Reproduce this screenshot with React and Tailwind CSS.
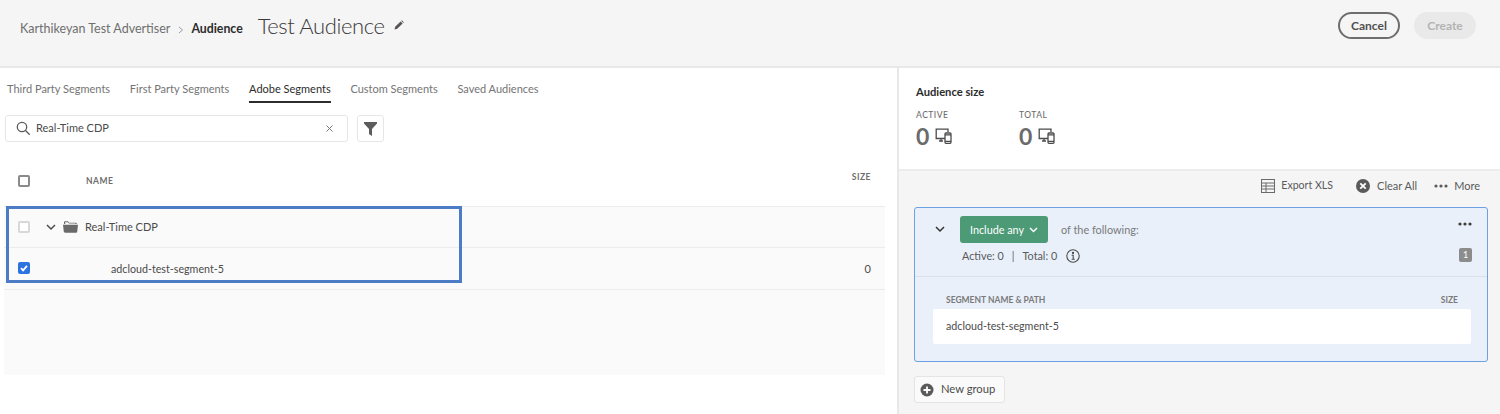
import React from 'react';

const DeviceIcon = () => (
    <svg width="17" height="16" viewBox="0 0 17 16" fill="none" stroke="#4b4b4b" strokeWidth="1.3">
        <path d="M10 10.5H1.2V1.2H13V4" />
        <path d="M4 13h4M6 10.5V13" />
        <rect x="10" y="5" width="6" height="10.3" rx="1" fill="#fff" />
        <path d="M10 6.8h6M10 13.4h6" />
    </svg>
);

const Stat = ({ label, className }) => (
    <div className={className}>
        <div className="mt-[1px] text-[8.5px] leading-3 tracking-[0.5px] font-medium text-[#6e6e6e]">{label}</div>
        <div className="mt-[1px] flex items-center gap-[6px]">
            <span className="text-[23px] leading-7 font-bold text-[#6b6b6b]">0</span>
            <DeviceIcon />
        </div>
    </div>
);

const Tab = ({ label, active }) => (
    <div className={`h-[35px] pt-[13px] text-[11px] leading-[16px] whitespace-nowrap ${active ? 'border-b-2 border-[#2c2c2c] text-[#2c2c2c]' : 'text-[#747474]'}`}>
        {label}
    </div>
);

const Checkbox = ({ checked, light }) => (
    <div className={`w-3 h-3 rounded-[2px] flex items-center justify-center ${checked ? 'bg-[#2d73e0]' : light ? 'border-2 border-[#d8d8d8] bg-white' : 'border-2 border-[#8a8a8a] bg-white'}`}>
        {checked && (
            <svg width="10" height="10" viewBox="0 0 10 10" fill="none" stroke="#fff" strokeWidth="1.8">
                <path d="M2 5.2l2.1 2.2L8 2.8" />
            </svg>
        )}
    </div>
);

const App = () => {
    return (
        <div className="relative w-[1500px] h-[414px] overflow-hidden bg-white text-[#4b4b4b] font-['Lato','Liberation_Sans',sans-serif]">
            {/* header */}
            <div className="h-[68px] bg-[#f5f5f5] border-b-2 border-[#e8e8e8] flex items-start justify-between pl-[20px] pr-[24px]">
                <div className="flex items-center h-[52px]">
                    <span className="text-[12.5px] pt-[7px] text-[#6f6f6f]">Karthikeyan Test Advertiser</span>
                    <svg className="ml-[8px] mt-[7px]" width="6" height="8" viewBox="0 0 6 8" fill="none" stroke="#9a9a9a" strokeWidth="1">
                        <path d="M1 1l3.5 3L1 7" />
                    </svg>
                    <span className="ml-[7px] pt-[7px] text-[12.3px] font-bold text-[#2c2c2c]">Audience</span>
                    <span className="ml-[15px] text-[22px] tracking-[-0.4px] leading-8 font-light text-[#3a3a3a]">Test Audience</span>
                    <svg className="ml-[9px] -mt-[2px]" width="10" height="10" viewBox="0 0 10 10" fill="#555">
                        <path d="M0.5 9.5l0.7-2.7 5.4-5.4 2 2-5.4 5.4zM7.2 0.8l0.6-0.5 2 2-0.5 0.6z" />
                    </svg>
                </div>
                <div className="flex items-center gap-[14px] pt-[12px]">
                    <div className="w-[62px] h-[27px] rounded-full border-2 border-[#6e6e6e] flex items-center justify-center text-[12px] font-bold text-[#505050]">Cancel</div>
                    <div className="w-[62px] h-[27px] rounded-full bg-[#e9e9e9] flex items-center justify-center text-[12px] font-bold text-[#b3b3b3]">Create</div>
                </div>
            </div>

            <div className="flex h-[346px]">
                {/* left panel */}
                <div className="w-[899px] shrink-0 border-r-2 border-[#e8e8e8]">
                    <div className="flex gap-[19.75px] pl-[7px] h-[35px]">
                        <Tab label="Third Party Segments" />
                        <Tab label="First Party Segments" />
                        <Tab label="Adobe Segments" active />
                        <Tab label="Custom Segments" />
                        <Tab label="Saved Audiences" />
                    </div>
                    <div className="flex gap-[9px] pl-[5px] mt-[12px]">
                        <div className="w-[343px] h-[27px] border border-[#e6e6e6] rounded-[3px] flex items-center pl-[10px] pr-[14px]">
                            <svg width="15" height="15" viewBox="0 0 15 15" fill="none" stroke="#5a5a5a" strokeWidth="1.3">
                                <circle cx="6" cy="6" r="4.7" />
                                <path d="M9.5 9.5l4.2 4.2" />
                            </svg>
                            <span className="ml-[5px] text-[11px] text-[#4b4b4b] flex-1">Real-Time CDP</span>
                            <svg width="7" height="7" viewBox="0 0 7 7" stroke="#777" strokeWidth="1">
                                <path d="M0.5 0.5l6 6M6.5 0.5l-6 6" />
                            </svg>
                        </div>
                        <div className="w-[27px] h-[27px] border border-[#e6e6e6] rounded-[3px] flex items-center justify-center">
                            <svg width="13" height="14" viewBox="0 0 13 14" fill="#5c5c5c">
                                <path d="M0 0h13v1.6L8 7v7L5 12V7L0 1.6z" />
                            </svg>
                        </div>
                    </div>

                    {/* table */}
                    <div className="mt-[25px] flex items-center justify-between h-[27px] pl-[18px] pr-[26px]">
                        <div className="flex items-center">
                            <Checkbox />
                            <span className="ml-[56px] pt-[1px] text-[8.5px] font-bold tracking-[0.5px] text-[#6e6e6e]">NAME</span>
                        </div>
                        <span className="text-[8.5px] font-bold tracking-[0.5px] text-[#6e6e6e] -mt-[6px]">SIZE</span>
                    </div>
                    <div className="ml-[4px] mr-[12px] mt-[12px] h-[169px] bg-[#fafafa]">
                        <div className="h-[42px] border-t border-b border-[#ececec] flex items-center pl-[14px]">
                            <Checkbox light />
                            <svg className="ml-[16px]" width="10" height="7" viewBox="0 0 10 7" fill="none" stroke="#4b4b4b" strokeWidth="1.5">
                                <path d="M1 1l4 4 4-4" />
                            </svg>
                            <svg className="ml-[7px]" width="15" height="12" viewBox="0 0 15 12" fill="#6a6a6a">
                                <path d="M1 3V1.2C1 .6 1.4.3 2 .3h3l1.2 1.4H13c.5 0 .8.3.8.8V3H12.5v-.4H6L4.8 1.2H2.2V3z" />
                                <path d="M0 3.8h15l-.8 7c0 .5-.4.9-1 .9H1.8c-.6 0-1-.4-1-.9z" />
                            </svg>
                            <span className="ml-[7px] text-[11px]">Real-Time CDP</span>
                        </div>
                        <div className="h-[42px] border-b border-[#ececec] flex items-start pt-[14px] pl-[14px]">
                            <Checkbox checked />
                            <span className="ml-[81px] leading-[14px] text-[10.7px] flex-1">adcloud-test-segment-5</span>
                            <span className="leading-[14px] text-[11px] pr-[14px]">0</span>
                        </div>
                    </div>
                </div>

                {/* right panel */}
                <div className="flex-1 min-w-0 bg-[#f5f5f5]">
                    <div className="h-[103px] bg-white border-b-2 border-[#ececec] pl-[17px] pt-[17px]">
                        <div className="text-[11.2px] leading-[14px] font-bold text-[#2c2c2c]">Audience size</div>
                        <div className="flex mt-[9px]">
                            <Stat label="ACTIVE" className="w-[103px]" />
                            <Stat label="TOTAL" />
                        </div>
                    </div>
                    <div className="h-[30px] flex items-center justify-end pr-[20px] text-[11px] text-[#5a5a5a]">
                        <svg width="14" height="14" viewBox="0 0 14 14" fill="none" stroke="#6a6a6a" strokeWidth="1">
                            <rect x="0.5" y="0.5" width="13" height="13" />
                            <path d="M0.5 4h13M0.5 7h13M0.5 10h13M5 4v9.5" />
                        </svg>
                        <span className="ml-[6px] text-[10.6px]">Export XLS</span>
                        <svg className="ml-[23px]" width="14" height="14" viewBox="0 0 14 14">
                            <circle cx="7" cy="7" r="7" fill="#5a5a5a" />
                            <path d="M4.3 4.3l5.4 5.4M9.7 4.3l-5.4 5.4" stroke="#fff" strokeWidth="1.8" />
                        </svg>
                        <span className="ml-[7px]">Clear All</span>
                        <svg className="ml-[17px]" width="14" height="4" viewBox="0 0 14 4" fill="#5a5a5a">
                            <circle cx="2" cy="2" r="1.6" /><circle cx="7" cy="2" r="1.6" /><circle cx="12" cy="2" r="1.6" />
                        </svg>
                        <span className="ml-[6px]">More</span>
                    </div>

                    {/* group card */}
                    <div className="ml-[15px] mr-[12px] mt-[6px] h-[155px] rounded-[3px] border border-[#6d9fe3] bg-[#e9f0fa]">
                        <div className="relative h-[69px] border-b border-[#dcdfe4] pl-[20px] pt-[8px]">
                            <div className="flex items-center">
                                <svg width="10" height="7" viewBox="0 0 10 7" fill="none" stroke="#333" strokeWidth="1.5">
                                    <path d="M1 1l4 4 4-4" />
                                </svg>
                                <div className="ml-[15px] w-[88px] h-[27px] pt-[1px] rounded-[3px] bg-[#4c9a76] flex items-center justify-center gap-[5px] text-[10.8px] text-white">
                                    Include any
                                    <svg width="9" height="6" viewBox="0 0 9 6" fill="none" stroke="#fff" strokeWidth="1.5">
                                        <path d="M1 1l3.5 3.5L8 1" />
                                    </svg>
                                </div>
                                <span className="ml-[13px] pt-[1px] text-[10.9px] text-[#7a7a7a]">of the following:</span>
                            </div>
                            <div className="flex items-center ml-[27px] mt-[5px] text-[10.8px] leading-4 text-[#5a5a5a]">
                                Active: 0
                                <span className="mx-[8px]">|</span>
                                Total: 0
                                <svg className="ml-[9px] -mt-[1px]" width="14" height="14" viewBox="0 0 14 14" fill="none" stroke="#4b4b4b" strokeWidth="1.1">
                                    <circle cx="7" cy="7" r="6.2" />
                                    <path d="M5.6 6.2H7.2V10.2M5.6 10.2H8.8" />
                                    <circle cx="7" cy="4" r="0.6" fill="#4b4b4b" />
                                </svg>
                            </div>
                            <svg className="absolute right-[15px] top-[14px]" width="14" height="4" viewBox="0 0 14 4" fill="#3d3d3d">
                                <circle cx="2" cy="2" r="1.6" /><circle cx="7" cy="2" r="1.6" /><circle cx="12" cy="2" r="1.6" />
                            </svg>
                            <div className="absolute right-[15px] top-[40px] w-[13px] h-[14px] rounded-[2px] bg-[#8c8c8c] flex items-center justify-center text-[9px] text-white">1</div>
                        </div>
                        <div className="flex justify-between pl-[31px] pr-[29px] pt-[17px] text-[8.5px] leading-3 font-bold text-[#7a7a7a]">
                            <span>SEGMENT NAME &amp; PATH</span>
                            <span>SIZE</span>
                        </div>
                        <div className="ml-[18px] mr-[16px] mt-[3px] h-[35px] bg-white rounded-[2px] flex items-center pl-[13px] text-[10.7px]">
                            adcloud-test-segment-5
                        </div>
                    </div>

                    <div className="ml-[15px] mt-[14px] w-[91px] h-[27px] rounded-[3px] border border-[#e4e4e4] bg-[#fafafa] flex items-center gap-[7px] pl-[5px] text-[11.2px]">
                        <svg width="14" height="14" viewBox="0 0 14 14">
                            <circle cx="7" cy="7" r="6.5" fill="#5a5a5a" />
                            <path d="M7 3.5v7M3.5 7h7" stroke="#fff" strokeWidth="1.8" />
                        </svg>
                        New group
                    </div>
                </div>
            </div>

            {/* annotation box */}
            <div className="absolute left-[6px] top-[206px] w-[456px] h-[77px] border-[3px] border-[#4d7cc7]" />
        </div>
    );
};

export default App;
